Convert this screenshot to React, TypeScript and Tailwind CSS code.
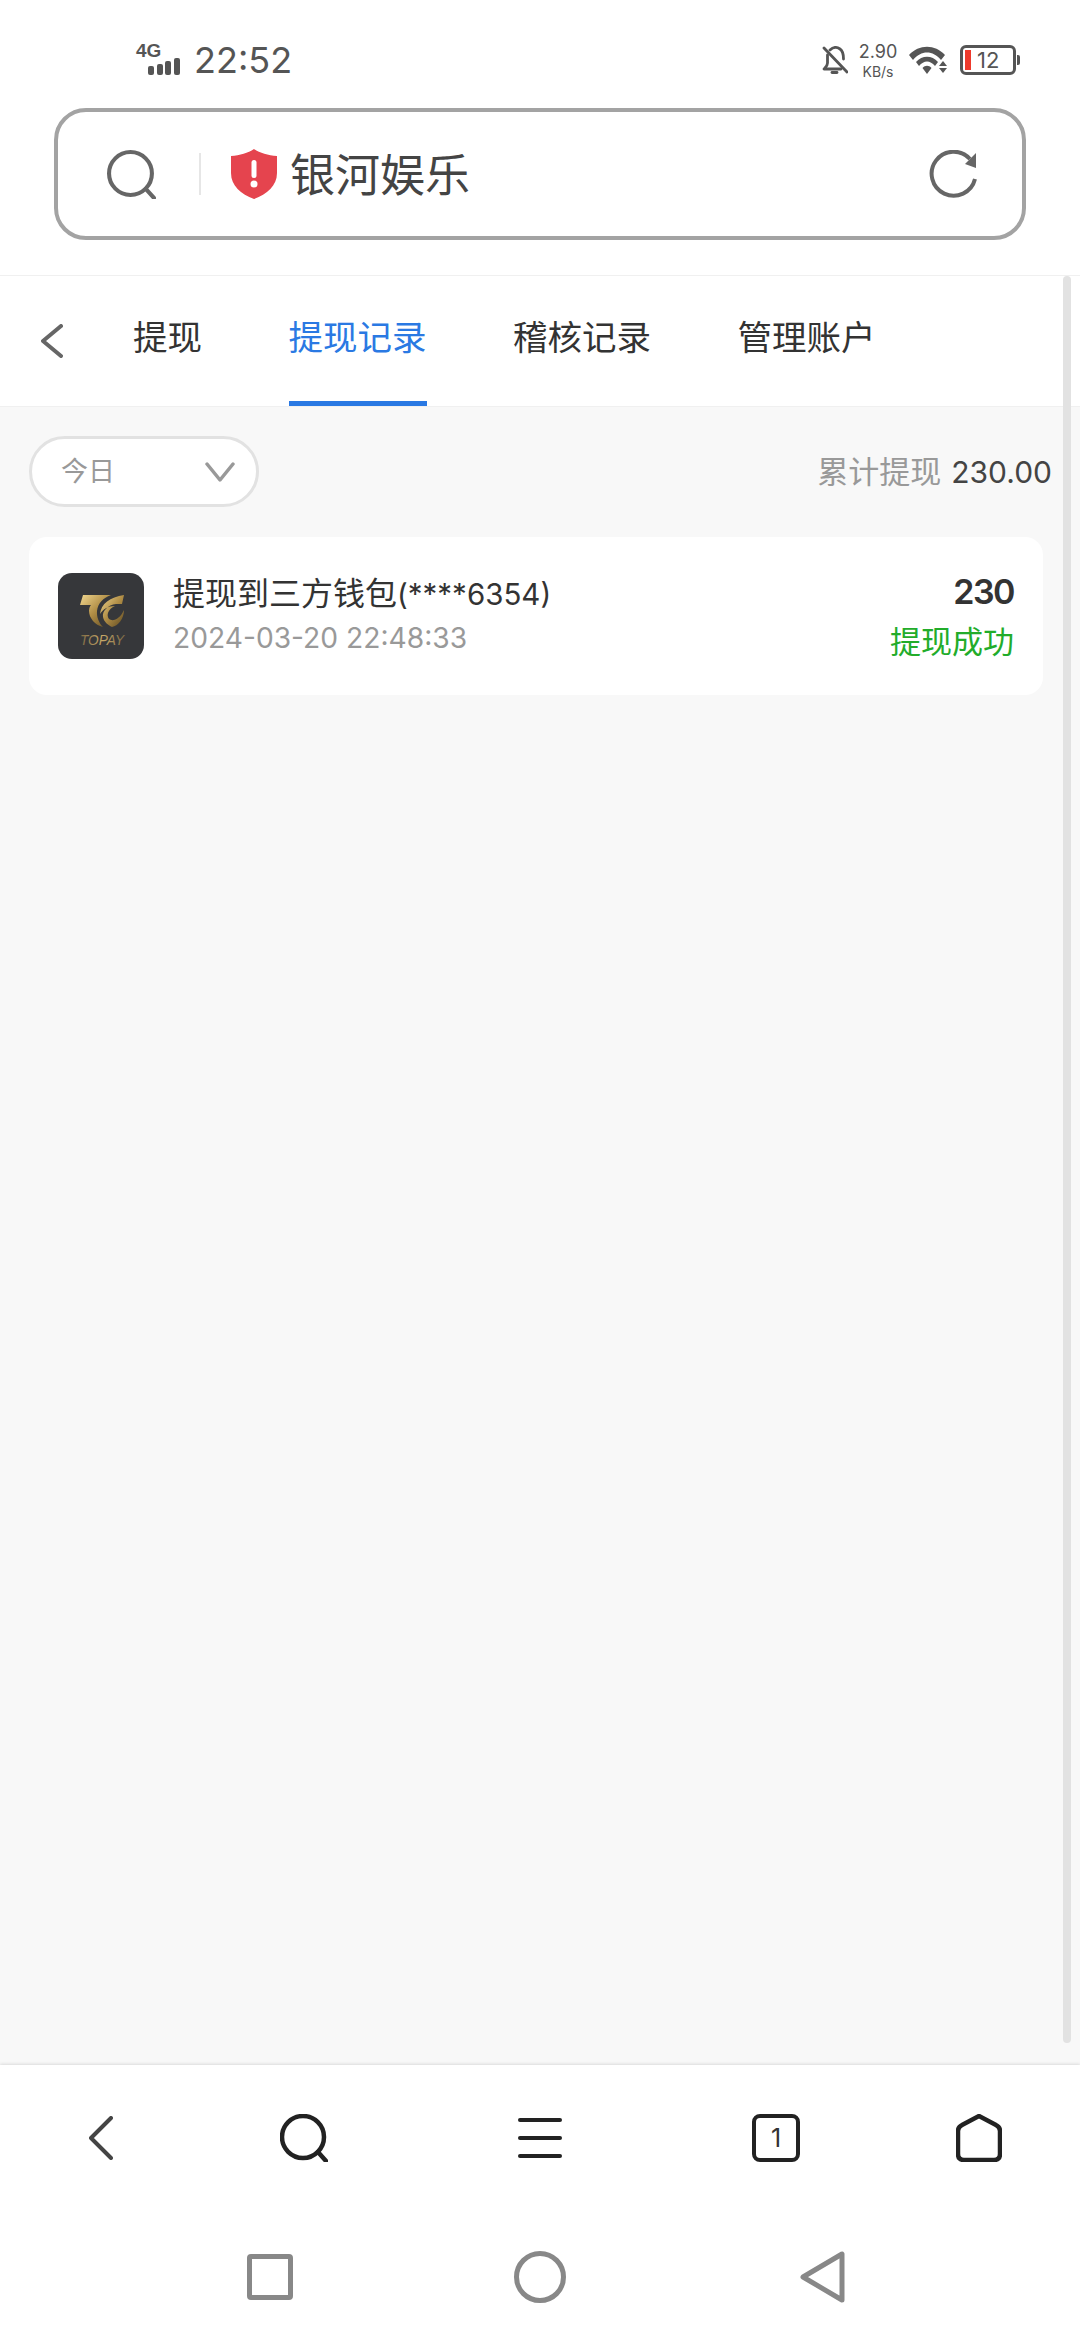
import { ReactNode } from 'react'

const FONT = "font-[Inter,'Noto_Sans_CJK_SC',sans-serif]"

function Glass({ className, color, width }: { className: string; color: string; width: number }) {
  return (
    <svg viewBox="0 0 48 48" className={className} fill="none" stroke={color} strokeWidth={width} strokeLinecap="round">
      <circle cx="23" cy="23" r="21" />
      <path d="M38 38 L46 47" />
    </svg>
  )
}

function StatusBar() {
  return (
    <div className="h-[108px] pt-[12px] pl-[136px] pr-[60px] flex items-center justify-between text-[#555]">
      <div className="flex items-center">
        <div className="relative w-[48px] h-[30px] mr-[10px]">
          <span className="absolute left-0 top-[-4px] text-[19px] leading-[20px] font-bold font-['Liberation_Sans',sans-serif]">4G</span>
          <div className="absolute left-[12px] bottom-0 flex items-end gap-[2.5px]">
            <i className="block w-[6px] h-[9px] rounded-[2px] bg-[#555]" />
            <i className="block w-[6px] h-[11px] rounded-[2px] bg-[#555]" />
            <i className="block w-[6px] h-[14px] rounded-[2px] bg-[#555]" />
            <i className="block w-[6px] h-[17px] rounded-[2px] bg-[#555]" />
          </div>
        </div>
        <span className="text-[36px] leading-none">22:52</span>
      </div>
      <div className="flex items-center">
        <svg viewBox="0 0 26 28" className="w-[26px] h-[28px]" fill="none" stroke="#555" strokeWidth="2.8" strokeLinecap="round" strokeLinejoin="round">
          <path d="M2 2 L25 26" />
          <path d="M8 4 C11 1 15 1 18 3 C21 5 21.500 8 21.500 13" />
          <path d="M5.500 9 L5.500 17 C5.500 20 4 21 2 23 L19 23" />
          <path d="M10 26.500 H15" />
        </svg>
        <div className="ml-[11px] w-[38px] flex flex-col items-center">
          <span className="text-[18px] leading-[22px]">2.90</span>
          <span className="text-[14px] leading-[17px]">KB/s</span>
        </div>
        <svg viewBox="0 0 38 28" className="ml-[12px] w-[38px] h-[28px]" fill="#555">
          <path d="M0 9 C10 -2 26 -2 36 9 L32 14 C24 4 12 4 4 14 Z" />
          <path d="M7 16 C13 9 23 9 29 16 L26 20 C21 14 15 14 10 20 Z" />
          <path d="M13.500 22 C16 19 20 19 22.500 22 L18 28 Z" />
          <path d="M34 15 L38 20 H30 Z" />
          <path d="M34 27 L38 22 H30 Z" />
        </svg>
        <div className="ml-[13px] flex items-center">
          <div className="w-[56px] h-[30px] rounded-[6px] border-[3px] border-[#555] flex items-center pl-[2px]">
            <i className="block w-[6px] h-[20px] bg-[#ee3a2c]" />
            <span className="ml-[6px] text-[22px] leading-none">12</span>
          </div>
          <i className="block ml-[1px] w-[3px] h-[10px] rounded-r-[2px] bg-[#555]" />
        </div>
      </div>
    </div>
  )
}

function AddressBar() {
  return (
    <div className="mx-[54px] mb-[35px] h-[132px] rounded-[32px] border-[4px] border-[#a3a3a3] flex items-center pl-[49px] pr-[45px] bg-white">
      <Glass className="w-[49px] h-[49px]" color="#666" width={4} />
      <i className="block ml-[43px] w-[2px] h-[42px] bg-[#e6e6e6]" />
      <svg viewBox="0 0 46 50" className="ml-[30px] w-[46px] h-[50px]">
        <path d="M23 0 C29 4 37 6.500 46 7 V24 C46 37 36 45 23 50 C10 45 0 37 0 24 V7 C9 6.500 17 4 23 0 Z" fill="#e5444e" />
        <rect x="20.500" y="11" width="5" height="18" rx="2.500" fill="#fff" />
        <circle cx="23" cy="35" r="3.500" fill="#fff" />
      </svg>
      <span className="ml-[13px] mt-[2px] text-[45px] leading-none text-[#444]">银河娱乐</span>
      <svg viewBox="0 0 48 48" className="ml-auto w-[48px] h-[48px]" fill="none" stroke="#666" strokeWidth="4">
        <path d="M46 29 A22 22 0 1 1 41 9" />
        <path d="M47 3 V18 L36 14 Z" fill="#666" stroke="none" />
      </svg>
    </div>
  )
}

function Tab({ children, active }: { children: ReactNode; active?: boolean }) {
  return (
    <div className={`relative h-full flex items-center text-[34.5px] leading-none pb-[6px] ${active ? 'text-[#2a79e3]' : 'text-[#333]'}`}>
      {children}
      {active && <i className="absolute left-0 right-0 bottom-0 h-[5px] bg-[#2a79e3]" />}
    </div>
  )
}

function TabStrip() {
  return (
    <div className="h-[132px] bg-white border-y-[1.500px] border-[#f0f0f0] flex items-center pl-[41px]">
      <svg viewBox="0 0 22 34" className="w-[22px] h-[34px] mr-[70px]" fill="none" stroke="#666" strokeWidth="4" strokeLinecap="round" strokeLinejoin="round">
        <path d="M20 2 L2 17 L20 32" />
      </svg>
      <div className="h-full flex items-center gap-[86.500px]">
        <Tab>提现</Tab>
        <Tab active>提现记录</Tab>
        <Tab>稽核记录</Tab>
        <Tab>管理账户</Tab>
      </div>
    </div>
  )
}

// gold mark on the wallet tile
function WalletLogo() {
  return (
    <svg viewBox="0 0 86 86" className="w-[86px] h-[86px] shrink-0 rounded-[14px] bg-[#36373a]">
      <defs>
        <linearGradient id="gold" x1="0" y1="0" x2="1" y2="1">
          <stop offset="0" stopColor="#f0d68f" />
          <stop offset="0.5" stopColor="#b08d45" />
          <stop offset="1" stopColor="#5f4a22" />
        </linearGradient>
        <linearGradient id="goldText" x1="0" y1="0" x2="1" y2="0">
          <stop offset="0" stopColor="#7d6a45" />
          <stop offset="0.5" stopColor="#c7a767" />
          <stop offset="1" stopColor="#7d6a45" />
        </linearGradient>
      </defs>
      <path d="M25 22 H53 C45 25 40 30 39 38 C38.500 44 41 50 45 54 C37 52 31 45 31 38 C31 35 32 33 33 32 H22 Z" fill="url(#gold)" />
      <path d="M66 22 L64 31 H58 C50 32 44 38 45 44 C46 49 50 52 54 54 C60 53 66 46 66 37 C62 46 55 49 51 46 C48 42 50 36 57 33 C50 33 45 36 42 41 C43 31 52 24 66 22 Z" fill="url(#gold)" />
      <text x="22" y="72" textLength="44" lengthAdjust="spacingAndGlyphs" fontSize="15" fontStyle="italic" fontFamily="'Liberation Sans', sans-serif" fill="url(#goldText)">TOPAY</text>
    </svg>
  )
}

function RecordCard() {
  return (
    <div className="mt-[30px] ml-[29px] mr-[37px] h-[158px] rounded-[18px] bg-white flex items-center pl-[29px] pr-[29px]">
      <WalletLogo />
      <div className="ml-[29px] flex flex-col">
        <span className="text-[32px] leading-[38px] text-[#333]">提现到三方钱包<span className="text-[29.5px]">(****6354)</span></span>
        <span className="mt-[6px] text-[28.2px] leading-[38px] text-[#999]">2024-03-20 22:48:33</span>
      </div>
      <div className="ml-auto flex flex-col items-end">
        <span className="text-[34px] leading-[40px] font-semibold tracking-[-1.5px] text-[#333]">230</span>
        <span className="mt-[11px] text-[31px] leading-[38px] text-[#22ac2a]">提现成功</span>
      </div>
    </div>
  )
}

function Records() {
  return (
    <div className="flex-1 bg-[#f8f8f8] pt-[29px]">
      <div className="flex items-center justify-between pl-[29px] pr-[28px]">
        <div className="w-[230px] h-[71px] rounded-full border-[3px] border-[#e2e2e2] bg-white flex items-center pl-[29px] pr-[21px]">
          <span className="text-[27px] leading-none text-[#999]">今日</span>
          <svg viewBox="0 0 30 20" className="ml-auto w-[30px] h-[20px]" fill="none" stroke="#999" strokeWidth="3.500" strokeLinecap="round" strokeLinejoin="round">
            <path d="M2 2 L15 18 L28 2" />
          </svg>
        </div>
        <div className="text-[31px] leading-none">
          <span className="text-[#999]">累计提现</span>
          <span className="ml-[10px] text-[30px] text-[#444]">230.00</span>
        </div>
      </div>
      <RecordCard />
    </div>
  )
}

function ToolBar() {
  return (
    <div className="h-[112px] pt-[49px] box-content">
      <div className="flex items-center pl-[89px]">
        <svg viewBox="0 0 24 44" className="w-[24px] h-[44px]" fill="none" stroke="#444" strokeWidth="4" strokeLinecap="round" strokeLinejoin="round">
          <path d="M22 2 L2 22 L22 42" />
        </svg>
        <Glass className="ml-[167px] w-[48px] h-[48px]" color="#222" width={4.500} />
        <div className="ml-[190px] w-[44px] flex flex-col gap-[14px]">
          <i className="block h-[4px] rounded-full bg-[#222]" />
          <i className="block h-[4px] rounded-full bg-[#222]" />
          <i className="block h-[4px] rounded-full bg-[#222]" />
        </div>
        <div className="ml-[190px] w-[48px] h-[48px] rounded-[8px] border-[4px] border-[#222] flex items-center justify-center text-[25px] leading-none text-[#333]">1</div>
        <svg viewBox="0 0 46 48" className="ml-[156px] w-[46px] h-[48px]" fill="none" stroke="#222" strokeWidth="4.500" strokeLinejoin="round">
          <path d="M23 2 L40 11 Q44 13 44 17 V40 Q44 46 38 46 H8 Q2 46 2 40 V17 Q2 13 6 11 Z" />
        </svg>
      </div>
    </div>
  )
}

function SystemNav() {
  return (
    <div className="flex-1 flex items-start pt-[23px] pl-[247px]">
      <div className="mt-[5px] w-[46px] h-[46px] rounded-[4px] border-[5px] border-[#888]" />
      <div className="ml-[221px] w-[52px] h-[52px] mt-[2px] rounded-full border-[5px] border-[#888]" />
      <svg viewBox="0 0 45 52" className="ml-[234px] mt-[2px] w-[45px] h-[52px]" fill="none" stroke="#888" strokeWidth="5" strokeLinejoin="round">
        <path d="M3 26 L42 3 V49 Z" />
      </svg>
    </div>
  )
}

export default function App() {
  return (
    <div className={`relative w-[1080px] h-[2340px] flex flex-col bg-white overflow-hidden ${FONT}`}>
      <StatusBar />
      <AddressBar />
      <TabStrip />
      <Records />
      <div className="h-[275px] flex flex-col bg-white shadow-[0_-1px_3px_rgba(0,0,0,0.12)] z-10">
        <ToolBar />
        <SystemNav />
      </div>
      {/* page scroll indicator */}
      <i className="absolute left-[1063px] top-[276px] w-[8px] h-[1767px] rounded-full bg-[#e2e2e2]" />
    </div>
  )
}
